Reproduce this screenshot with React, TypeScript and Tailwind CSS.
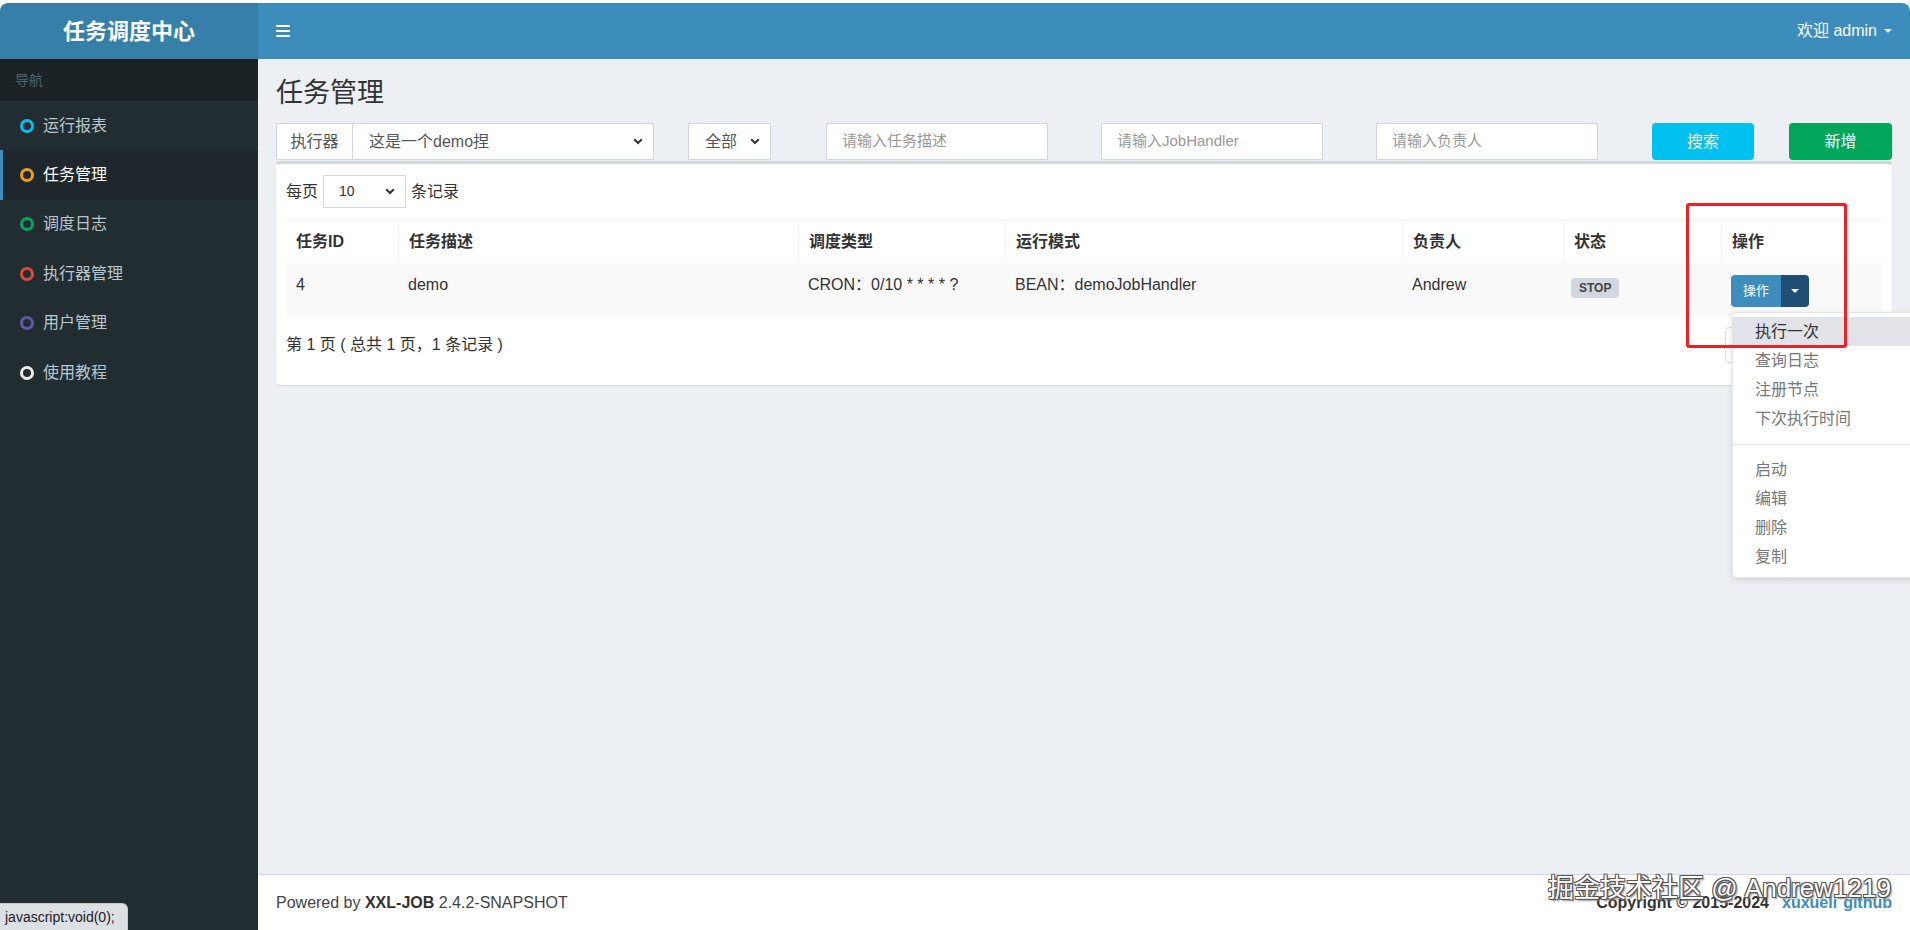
import React from 'react';

const menu = [
  { label: '运行报表', ring: 'border-[#00c0ef]' },
  { label: '任务管理', ring: 'border-[#f39c12]', active: true },
  { label: '调度日志', ring: 'border-[#00a65a]' },
  { label: '执行器管理', ring: 'border-[#dd4b39]' },
  { label: '用户管理', ring: 'border-[#605ca8]' },
  { label: '使用教程', ring: 'border-[#eeeeee]' },
];

const columns = [
  { title: '任务ID', w: 'w-[112px]' },
  { title: '任务描述', w: 'w-[400px]' },
  { title: '调度类型', w: 'w-[207px]' },
  { title: '运行模式', w: 'w-[397px]' },
  { title: '负责人', w: 'w-[161px]' },
  { title: '状态', w: 'w-[158px]' },
  { title: '操作', w: 'w-[161px]' },
];

const actions = ['执行一次', '查询日志', '注册节点', '下次执行时间'];
const actions2 = ['启动', '编辑', '删除', '复制'];

const Chevron: React.FC = () => (
  <svg width="10" height="7" viewBox="0 0 10 7" className="shrink-0">
    <path d="M1.2 1.2l3.8 3.8 3.8-3.8" fill="none" stroke="#333" strokeWidth="2" />
  </svg>
);

/**
 * 任务管理 page: sidebar + job table with open action dropdown
 */
const App: React.FC = () => {
  return (
    <div className="relative h-[930px] w-[1910px] overflow-hidden bg-white pt-[3px] font-['Liberation_Sans','Noto_Sans_CJK_SC',sans-serif] text-[#333]">
      {/* Header */}
      <header className="flex h-[56px] overflow-hidden rounded-t-[8px]">
        <div className="flex w-[258px] items-center justify-center bg-[#367fa9] text-[22px] font-bold text-white">
          任务调度中心
        </div>
        <div className="flex flex-1 items-center justify-between bg-[#3c8dbc] pl-[18px] pr-[18px]">
          <div className="flex w-[14px] flex-col gap-[2.5px]">
            <span className="h-[2.5px] bg-white" />
            <span className="h-[2.5px] bg-white" />
            <span className="h-[2.5px] bg-white" />
          </div>
          <div className="flex items-center gap-[7px] text-[16px] text-white">
            <span>欢迎 admin</span>
            <span className="h-0 w-0 border-x-[4px] border-t-[4px] border-x-transparent border-t-white" />
          </div>
        </div>
      </header>

      <div className="flex h-[871px]">
        {/* Sidebar */}
        <aside className="w-[258px] bg-[#222d32]">
          <div className="flex h-[42px] items-center bg-[#1a2226] pl-[15px] text-[14px] text-[#4b646f]">导航</div>
          {menu.map((m) => (
            <div
              key={m.label}
              className={`flex h-[49.4px] items-center border-l-[3px] pl-[17px] text-[16px] ${
                m.active ? 'border-[#3c8dbc] bg-[#1e282c] text-white' : 'border-transparent text-[#b8c7ce]'
              }`}
            >
              <span className={`mr-[9px] h-[14px] w-[14px] rounded-full border-[3px] ${m.ring}`} />
              {m.label}
            </div>
          ))}
        </aside>

        {/* Content */}
        <div className="flex flex-1 flex-col bg-[#ecf0f5]">
          <main className="flex-1 px-[18px] pt-[19px]">
            <h1 className="h-[30px] text-[27px] leading-[30px]">任务管理</h1>

            {/* Filters */}
            <div className="mt-[15px] flex h-[37px] text-[16px]">
              <div className="flex w-[378px] border border-[#d2d6de] bg-white">
                <div className="flex w-[76px] items-center justify-center border-r border-[#d2d6de] text-[#555]">执行器</div>
                <div className="flex flex-1 items-center justify-between pl-[16px] pr-[10px] text-[#555]">
                  <span>这是一个demo捏</span>
                  <Chevron />
                </div>
              </div>
              <div className="ml-[34px] flex w-[83px] items-center justify-between border border-[#d2d6de] bg-white pl-[16px] pr-[10px] text-[#555]">
                <span>全部</span>
                <Chevron />
              </div>
              {['请输入任务描述', '请输入JobHandler', '请输入负责人'].map((p, i) => (
                <input
                  key={p}
                  placeholder={p}
                  className={`${i === 0 ? 'ml-[55px]' : 'ml-[53px]'} w-[222px] border border-[#d2d6de] bg-white px-[15px] text-[15px] outline-none placeholder:text-[#999]`}
                />
              ))}
              <button className="ml-[54px] w-[102px] rounded-[4px] bg-[#00c0ef] text-white">搜索</button>
              <button className="ml-[35px] w-[103px] rounded-[4px] bg-[#00a65a] text-white">新增</button>
            </div>

            {/* Box */}
            <div className="mt-[1px] rounded-[3px] border-t-[3px] border-[#d2d6de] bg-white px-[10px] pb-[22px] pt-[11px] shadow-[0_1px_1px_rgba(0,0,0,0.1)]">
              <div className="flex h-[33px] items-center text-[16px]">
                <span>每页</span>
                <div className="mx-[5px] flex h-[33px] w-[83px] items-center justify-between border border-[#d2d6de] pl-[15px] pr-[10px] text-[14px]">
                  <span>10</span>
                  <Chevron />
                </div>
                <span>条记录</span>
              </div>

              {/* Table */}
              <div className="mt-[11px] text-[16px]">
                <div className="flex h-[44px] border-t border-[#f4f4f4] font-bold">
                  {columns.map((c, i) => (
                    <div key={c.title} className={`${c.w} flex items-center px-[10px] ${i > 0 ? 'border-l border-[#f4f4f4]' : ''}`}>
                      {c.title}
                    </div>
                  ))}
                </div>
                <div className="flex h-[54px] bg-[#f9f9f9]">
                  <div className="w-[112px] px-[10px] pt-[12px] leading-[20px]">4</div>
                  <div className="w-[400px] px-[10px] pt-[12px] leading-[20px]">demo</div>
                  <div className="w-[207px] px-[10px] pt-[12px] leading-[20px]">CRON：0/10 * * * * ?</div>
                  <div className="w-[397px] px-[10px] pt-[12px] leading-[20px]">BEAN：demoJobHandler</div>
                  <div className="w-[161px] px-[10px] pt-[12px] leading-[20px]">Andrew</div>
                  <div className="w-[158px] px-[8px] pt-[12px]">
                    <span className="inline-block rounded-[4px] bg-[#d2d6de] px-[8px] py-[2px] text-[12px] font-bold leading-[16px] text-[#444]">
                      STOP
                    </span>
                  </div>
                  <div className="w-[161px] px-[10px] pt-[12px]">
                    <div className="relative flex h-[32px] w-[78px]">
                      <div className="flex w-[50px] items-center justify-center rounded-l-[4px] bg-[#3c8dbc] text-[13px] text-white">操作</div>
                      <div className="flex w-[28px] items-center justify-center rounded-r-[4px] bg-[#204d74]">
                        <span className="h-0 w-0 border-x-[4px] border-t-[4px] border-x-transparent border-t-white" />
                      </div>

                      {/* Open dropdown */}
                      <div className="absolute left-[1px] top-[37px] z-20 w-[200px] rounded-[4px] border border-[#e5e5e5] bg-white pb-[6px] pt-[4px] text-[16px] text-[#777] shadow-[0_2px_6px_rgba(0,0,0,0.12)]">
                        {actions.map((a, i) => (
                          <div key={a} className={`h-[29px] pl-[22px] leading-[29px] ${i === 0 ? 'bg-[#e1e3e9] text-[#333]' : ''}`}>
                            {a}
                          </div>
                        ))}
                        <div className="mb-[10px] mt-[11px] h-px bg-[#e5e5e5]" />
                        {actions2.map((a) => (
                          <div key={a} className="h-[29px] pl-[22px] leading-[29px]">
                            {a}
                          </div>
                        ))}
                      </div>
                    </div>
                  </div>
                </div>
              </div>

              <div className="mt-[10px] flex h-[36px] items-center justify-between text-[16px]">
                <span>第 1 页 ( 总共 1 页，1 条记录 )</span>
                <div className="flex h-[36px] w-[157px] overflow-hidden rounded-[4px] border border-[#ddd] text-[14px] text-[#3c8dbc]">
                  <span className="flex flex-1 items-center justify-center border-r border-[#ddd]">上页</span>
                  <span className="flex flex-1 items-center justify-center border-r border-[#ddd]">1</span>
                  <span className="flex flex-1 items-center justify-center">下页</span>
                </div>
              </div>
            </div>
          </main>

          {/* Footer */}
          <footer className="flex h-[56px] items-center justify-between border-t border-[#d2d6de] bg-white px-[18px] text-[16px] text-[#444]">
            <span>
              Powered by <b className="text-[#333]">XXL-JOB</b> 2.4.2-SNAPSHOT
            </span>
            <span className="font-bold">
              <span className="text-[#333]">Copyright © 2015-2024</span>
              <span className="ml-[13px] text-[#3c8dbc]">xuxueli</span>
              <span className="ml-[6px] text-[#3c8dbc]">github</span>
            </span>
          </footer>
        </div>
      </div>

      {/* Annotation rectangle from the screenshot */}
      <div className="pointer-events-none absolute left-[1686px] top-[203px] z-30 h-[145px] w-[161px] rounded-[3px] border-[3px] border-[#ea2227]" />

      {/* Watermark */}
      <div className="pointer-events-none absolute left-[1548px] top-[872px] z-30 text-[26px] leading-[32px] text-white [text-shadow:1px_1px_0_#555,-1px_-1px_0_#555,1px_-1px_0_#555,-1px_1px_0_#555,2px_2px_2px_#888]">
        掘金技术社区 @ Andrew1219
      </div>

      {/* Browser status bar */}
      <div className="absolute bottom-0 left-0 z-30 flex h-[27px] w-[128px] items-center rounded-tr-[6px] border-r border-t border-[#c8c8c8] bg-[#dcdfe3] pl-[5px] text-[14px] text-[#222]">
        javascript:void(0);
      </div>
    </div>
  );
};

export default App;
